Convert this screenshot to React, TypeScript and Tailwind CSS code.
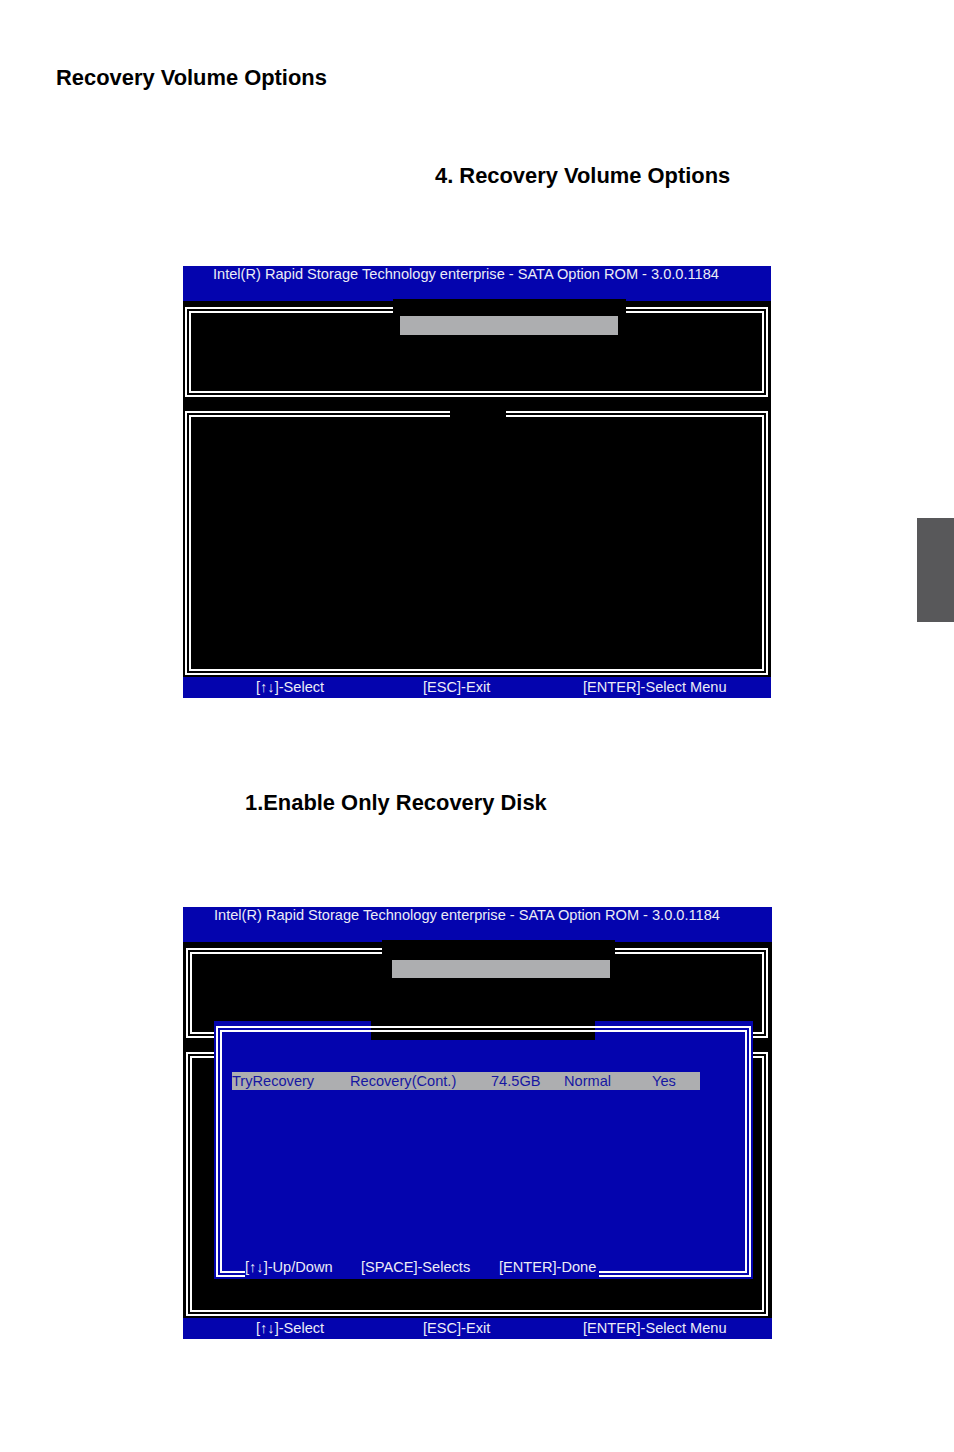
import React from "react";

const BLUE = "bg-[#0404ae]";

function Footer() {
  return (
    <div className="flex h-[21px] items-center bg-[#0404ae] pl-[73px] text-[14.6px] leading-[17px] text-[#ececf6]">
      <span className="w-[167px] shrink-0">[↑↓]-Select</span>
      <span className="w-[160px] shrink-0">[ESC]-Exit</span>
      <span>[ENTER]-Select Menu</span>
    </div>
  );
}

function Band({ pl }: { pl: string }) {
  return (
    <div className={`h-[35px] bg-[#0404ae] text-[14.6px] leading-[17px] text-[#ececf6] ${pl}`}>
      Intel(R) Rapid Storage Technology enterprise - SATA Option ROM - 3.0.0.1184
    </div>
  );
}

export default function App() {
  return (
    <div className="relative h-[1452px] w-[954px] overflow-hidden bg-white font-['Liberation_Sans',Arial,sans-serif] text-black">
      <div className="flex flex-col pt-[65px]">
        <h1 className="ml-[56px] text-[21.9px] font-bold leading-[25px]">Recovery Volume Options</h1>
        <h2 className="ml-[435px] mt-[73px] text-[21.9px] font-bold leading-[25px]">4. Recovery Volume Options</h2>

        {/* Screen 1 */}
        <div className="ml-[183px] mt-[78px] w-[588px]">
          <Band pl="pl-[30px]" />
          <div className="flex h-[376px] flex-col bg-black">
            <div className="relative ml-[2px] mr-[3px] mt-[6px] h-[90px] border-[6px] border-double border-white">
              <div className="absolute left-[202px] top-[-14px] h-[44px] w-[233px] bg-black pl-[7px] pt-[17px]">
                <div className="h-[19px] w-[218px] bg-[#adaeb0]" />
              </div>
            </div>
            <div className="relative ml-[2px] mr-[3px] mt-[14px] h-[264px] border-[6px] border-double border-white">
              <div className="absolute left-[259px] top-[-8px] h-[10px] w-[56px] bg-black" />
            </div>
          </div>
          <Footer />
        </div>

        <h3 className="ml-[245px] mt-[92px] text-[21.9px] font-bold leading-[25px]">1.Enable Only Recovery Disk</h3>

        {/* Screen 2 */}
        <div className="ml-[183px] mt-[92px] w-[589px]">
          <Band pl="pl-[31px]" />
          <div className="relative flex h-[376px] flex-col bg-black">
            <div className="relative ml-[3px] mr-[4px] mt-[6px] h-[90px] border-[6px] border-double border-white">
              <div className="absolute left-[190px] top-[-14px] h-[44px] w-[233px] bg-black pl-[10px] pt-[20px]">
                <div className="h-[18px] w-[218px] bg-[#adaeb0]" />
              </div>
            </div>
            <div className="relative ml-[3px] mr-[4px] mt-[14px] h-[264px] border-[6px] border-double border-white" />

            {/* Dialog */}
            <div className={`absolute left-[31px] top-[79px] flex h-[258px] w-[539px] flex-col ${BLUE} px-[2px] pb-[2px] pt-[5px]`}>
              <div className="absolute left-[157px] top-0 h-[19px] w-[224px] bg-black" />
              <div className="relative flex-1 border-[6px] border-double border-white">
                <div className="ml-[10px] mt-[40px] flex h-[18px] w-[468px] bg-[#adaeb0] text-[14.6px] leading-[18px] text-[#1616a2]">
                  <span className="w-[118px] shrink-0">TryRecovery</span>
                  <span className="w-[141px] shrink-0">Recovery(Cont.)</span>
                  <span className="w-[73px] shrink-0">74.5GB</span>
                  <span className="w-[88px] shrink-0">Normal</span>
                  <span>Yes</span>
                </div>
                <div className="absolute bottom-[-6px] left-[23px] flex h-[18px] bg-[#0404ae] pr-[3px] text-[14.6px] leading-[17px] text-[#ececf6]">
                  <span className="w-[116px] shrink-0">[↑↓]-Up/Down</span>
                  <span className="w-[138px] shrink-0">[SPACE]-Selects</span>
                  <span>[ENTER]-Done</span>
                </div>
              </div>
            </div>
          </div>
          <Footer />
        </div>
      </div>

      {/* side tab */}
      <div className="absolute left-[917px] top-[518px] h-[104px] w-[37px] bg-[#58585a]" />
    </div>
  );
}
